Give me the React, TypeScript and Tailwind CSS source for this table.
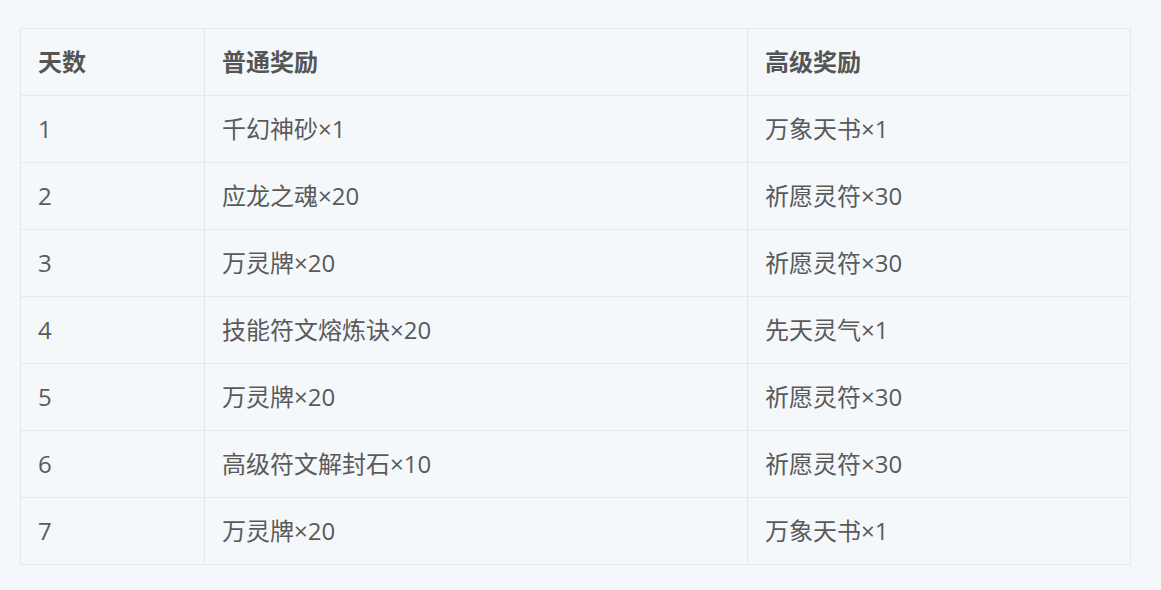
import React from "react";

const rows: [string, string, string][] = [
  ["1", "千幻神砂×1", "万象天书×1"],
  ["2", "应龙之魂×20", "祈愿灵符×30"],
  ["3", "万灵牌×20", "祈愿灵符×30"],
  ["4", "技能符文熔炼诀×20", "先天灵气×1"],
  ["5", "万灵牌×20", "祈愿灵符×30"],
  ["6", "高级符文解封石×10", "祈愿灵符×30"],
  ["7", "万灵牌×20", "万象天书×1"],
];

export default function App() {
  return (
    <div
      className="w-[1161px] h-[590px] bg-[#f4f8fb] pt-[28px] pl-[20px]"
      style={{ fontFamily: '"Open Sans", "Noto Sans CJK SC", sans-serif' }}
    >
      <table className="w-[1110px] border-collapse table-fixed text-[24px] text-[#5a5a5a]">
        <colgroup>
          <col className="w-[184px]" />
          <col className="w-[543px]" />
          <col className="w-[383px]" />
        </colgroup>
        <thead>
          <tr className="h-[67px]">
            {["天数", "普通奖励", "高级奖励"].map((h) => (
              <th
                key={h}
                className="border border-[#e6e9ec] text-left font-bold pl-[17px] text-[#555]"
              >
                {h}
              </th>
            ))}
          </tr>
        </thead>
        <tbody>
          {rows.map((r) => (
            <tr key={r[0]} className="h-[67px]">
              {r.map((c, i) => (
                <td key={i} className="border border-[#e6e9ec] pl-[17px]">
                  {c}
                </td>
              ))}
            </tr>
          ))}
        </tbody>
      </table>
    </div>
  );
}
